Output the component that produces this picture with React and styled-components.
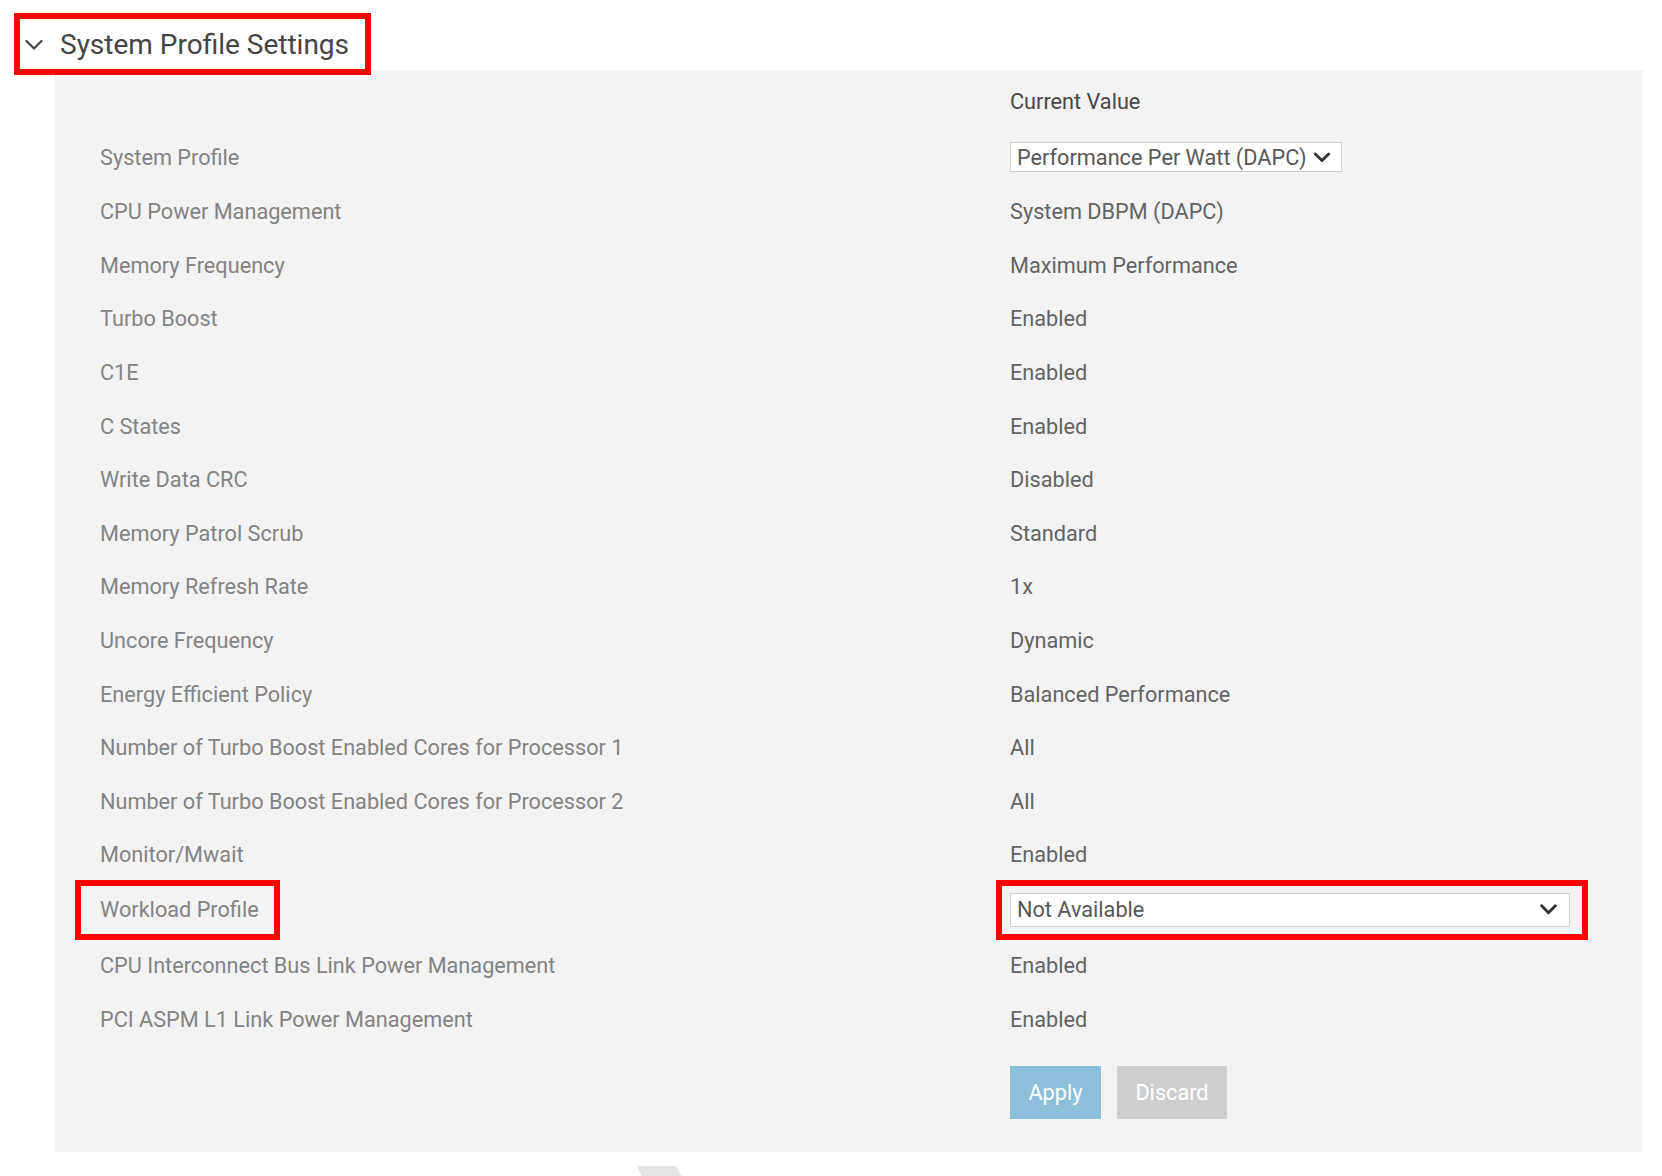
import React from 'react';
import styled, { createGlobalStyle, css } from 'styled-components';

const GlobalStyle = createGlobalStyle`
  html, body {
    margin: 0;
    padding: 0;
    background: #fff;
  }
  body {
    font-family: Roboto, "Liberation Sans", Arial, sans-serif;
  }
`;

const Page = styled.div`
  width: 1662px;
  box-sizing: border-box;
  padding: 13px 0 0 14px;
`;

const SectionHeader = styled.div`
  position: relative;
  z-index: 1;
  display: flex;
  align-items: center;
  gap: 17px;
  box-sizing: border-box;
  width: 357px;
  height: 62px;
  margin-bottom: -5px;
  padding: 2px 0 0 5px;
  border: 6px solid #ff0000;
`;

const Title = styled.h2`
  margin: 0;
  font-size: 28px;
  font-weight: 400;
  line-height: 1;
  color: #454545;
  white-space: nowrap;
`;

const Panel = styled.section`
  box-sizing: border-box;
  width: 1588px;
  margin-left: 41px;
  padding: 4px 0 33px 45px;
  background: #f3f3f3;
`;

const Row = styled.div`
  display: grid;
  grid-template-columns: 910px 1fr;
  align-items: center;
  height: ${({ $h }) => $h || 53.6}px;
`;

const Label = styled.div`
  font-size: 21.7px;
  color: #838383;
  white-space: nowrap;

  ${({ $marked }) => $marked && css`
    display: flex;
    align-items: center;
    box-sizing: border-box;
    width: 205px;
    height: 60px;
    margin: -2px 0 -2px -25px;
    padding-left: 19px;
    border: 6px solid #ff0000;
  `}
`;

const Value = styled.div`
  font-size: 21.7px;
  color: ${({ $head }) => ($head ? '#474747' : '#636363')};
  white-space: nowrap;
`;

const Marked = styled.div`
  display: flex;
  align-items: center;
  box-sizing: border-box;
  width: 592px;
  height: 60px;
  margin: -2px 0 -2px -14px;
  padding: 0 12px 0 8px;
  border: 6px solid #ff0000;
`;

const Select = styled.div`
  display: flex;
  align-items: center;
  justify-content: space-between;
  box-sizing: border-box;
  width: ${({ $w }) => $w}px;
  height: ${({ $h }) => $h}px;
  padding: 0 ${({ $pr }) => $pr || 11}px 0 6px;
  background: #fff;
  border: 1px solid #cfcfcf;
  font-size: 21.7px;
  color: #575757;
  white-space: nowrap;
`;

const Actions = styled.div`
  display: grid;
  grid-template-columns: 910px 1fr;
  margin-top: 19.6px;
`;

const ButtonGroup = styled.div`
  display: flex;
  gap: 16px;
`;

const Button = styled.button`
  box-sizing: border-box;
  width: ${({ $w }) => $w}px;
  height: 53px;
  padding: 0;
  border: none;
  background: ${({ $primary }) => ($primary ? '#8cc0da' : '#cecece')};
  color: #fff;
  font-family: inherit;
  font-size: 21.7px;
  cursor: default;
`;

const Tab = styled.div`
  width: 46px;
  height: 12px;
  margin: 14px 0 0 623px;
  background: #e4e4e4;
  clip-path: polygon(0 0, 84% 0, 100% 100%, 12% 100%);
`;

const Chevron = ({ w = 18, h = 12, sw = 2.2, color = '#444' }) => (
  <svg width={w} height={h} viewBox="0 0 18 12" fill="none">
    <polyline
      points="1.5,2 9,9.5 16.5,2"
      stroke={color}
      strokeWidth={sw}
      strokeLinecap="round"
      strokeLinejoin="round"
    />
  </svg>
);

const rows = [
  ['CPU Power Management', 'System DBPM (DAPC)'],
  ['Memory Frequency', 'Maximum Performance'],
  ['Turbo Boost', 'Enabled'],
  ['C1E', 'Enabled'],
  ['C States', 'Enabled'],
  ['Write Data CRC', 'Disabled'],
  ['Memory Patrol Scrub', 'Standard'],
  ['Memory Refresh Rate', '1x'],
  ['Uncore Frequency', 'Dynamic'],
  ['Energy Efficient Policy', 'Balanced Performance'],
  ['Number of Turbo Boost Enabled Cores for Processor 1', 'All'],
  ['Number of Turbo Boost Enabled Cores for Processor 2', 'All'],
  ['Monitor/Mwait', 'Enabled'],
];

const App = () => (
  <Page>
    <GlobalStyle />
    <SectionHeader>
      <Chevron />
      <Title>System Profile Settings</Title>
    </SectionHeader>
    <Panel>
      <Row $h={55}>
        <span />
        <Value $head>Current Value</Value>
      </Row>
      <Row $h={56}>
        <Label>System Profile</Label>
        <div>
          <Select $w={332} $h={30}>
            Performance Per Watt (DAPC)
            <Chevron w={16} h={11} sw={3.2} color="#333" />
          </Select>
        </div>
      </Row>
      {rows.map(([label, value]) => (
        <Row key={label}>
          <Label>{label}</Label>
          <Value>{value}</Value>
        </Row>
      ))}
      <Row $h={56}>
        <div>
          <Label $marked>Workload Profile</Label>
        </div>
        <div>
          <Marked>
            <Select $w={560} $h={34} $pr={12}>
              Not Available
              <Chevron w={17} h={11} sw={3.2} color="#333" />
            </Select>
          </Marked>
        </div>
      </Row>
      <Row $h={55}>
        <Label>CPU Interconnect Bus Link Power Management</Label>
        <Value>Enabled</Value>
      </Row>
      <Row>
        <Label>PCI ASPM L1 Link Power Management</Label>
        <Value>Enabled</Value>
      </Row>
      <Actions>
        <span />
        <ButtonGroup>
          <Button $primary $w={91}>Apply</Button>
          <Button $w={110}>Discard</Button>
        </ButtonGroup>
      </Actions>
    </Panel>
    <Tab />
  </Page>
);

export default App;
